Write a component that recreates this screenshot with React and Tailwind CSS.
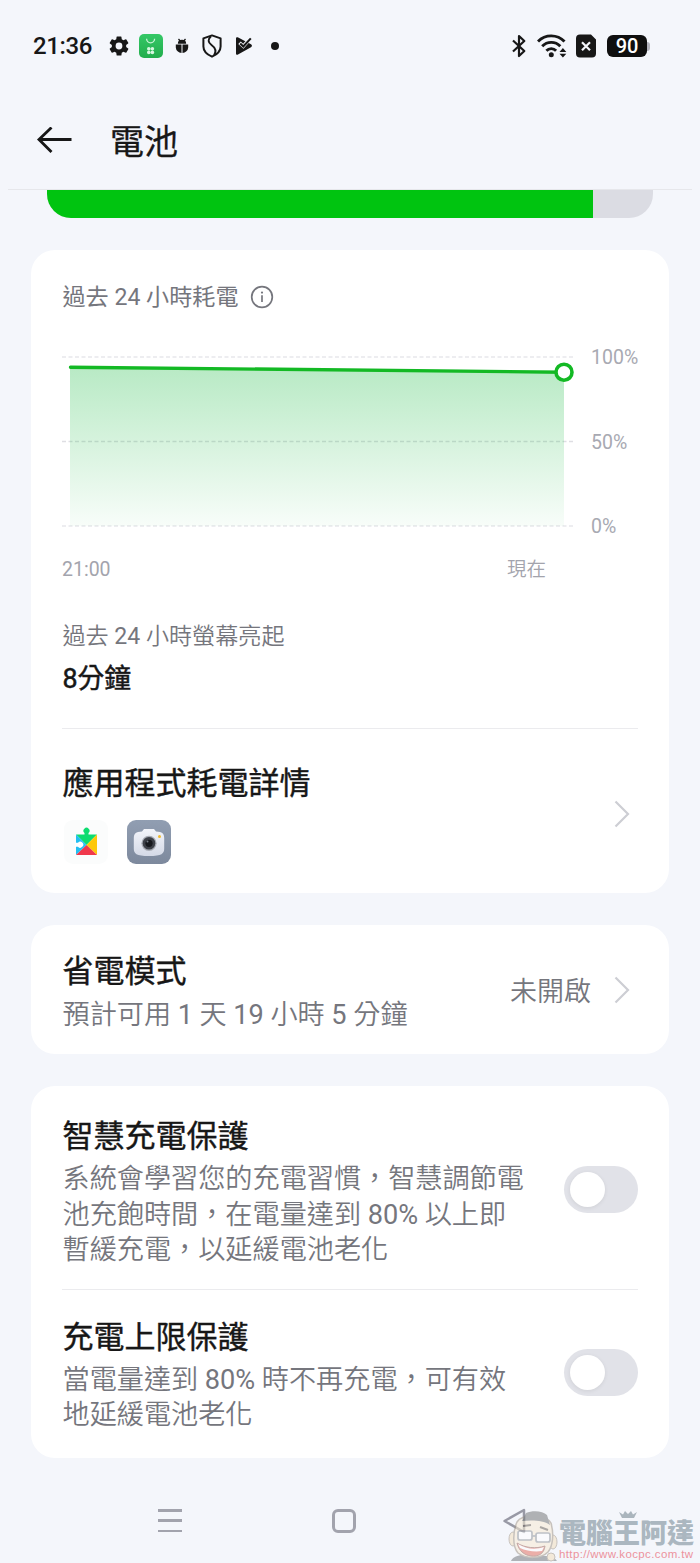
import React, { useState } from "react";

const StatusBar = () => {
  return (
    <div className="flex justify-between items-center h-[92px] pl-[33px] pr-[50px] text-[#171717]">
      <div className="flex items-center h-[28px]">
        <span className="w-[76px] text-[24px] leading-[28px] font-medium tracking-[-0.4px] whitespace-nowrap">
          21:36
        </span>
        <svg className="w-[20px] h-[20px]" viewBox="2 2 20 20" fill="currentColor">
          <path d="M19.14 12.94c.04-.3.06-.61.06-.94s-.02-.64-.07-.94l2.03-1.58a.49.49 0 0 0 .12-.61l-1.92-3.32a.49.49 0 0 0-.59-.22l-2.39.96a7 7 0 0 0-1.62-.94l-.36-2.54a.48.48 0 0 0-.48-.41h-3.84a.48.48 0 0 0-.47.41l-.36 2.54c-.59.24-1.13.57-1.62.94l-2.39-.96a.48.48 0 0 0-.59.22L2.74 8.87a.48.48 0 0 0 .12.61l2.03 1.58a7.3 7.3 0 0 0 0 1.88l-2.03 1.58a.49.49 0 0 0-.12.61l1.92 3.32c.12.22.37.29.59.22l2.39-.96c.5.38 1.03.7 1.62.94l.36 2.54c.05.24.24.41.48.41h3.84c.24 0 .44-.17.47-.41l.36-2.54a7 7 0 0 0 1.62-.94l2.39.96c.22.08.47 0 .59-.22l1.92-3.32a.48.48 0 0 0-.12-.61zM12 15.400a3.400 3.400 0 1 1 0-6.800 3.400 3.400 0 0 1 0 6.800z" />
        </svg>
        <svg className="w-[24px] h-[24px] ml-[10px]" viewBox="0 0 24 24">
          <defs>
            <linearGradient id="market" x1="0" y1="0" x2="0" y2="1">
              <stop offset="0" stopColor="#35c867" />
              <stop offset="1" stopColor="#22ad4c" />
            </linearGradient>
          </defs>
          <rect width="24" height="24" rx="5" fill="url(#market)" />
          <path d="M7.6 4.800a4 4 0 0 0 8 0" fill="none" stroke="#c9f3d6" strokeWidth="1.3" />
          <g fill="#d5f7df">
            <circle cx="9.8" cy="14.8" r="1.8" />
            <circle cx="13.4" cy="14.8" r="1.8" />
            <circle cx="9.8" cy="18.4" r="1.8" />
            <circle cx="13.4" cy="18.4" r="1.8" />
          </g>
        </svg>
        <svg className="w-[14px] h-[16px] ml-[12px]" viewBox="0 0 14 16">
          <path d="M3.500 1l1.700 2M10.500 1L8.800 3" stroke="currentColor" strokeWidth="1.3" />
          <path d="M2.800 5.800a4.200 4 0 0 1 8.400 0z" fill="currentColor" />
          <path d="M.8 6.600h5.700v8.300A5.800 5.800 0 0 1 .8 9.500zM7.500 6.600h5.700v2.900a5.800 5.800 0 0 1-5.700 5.400z" fill="currentColor" />
        </svg>
        <svg className="w-[20px] h-[24px] ml-[13px]" viewBox="0 0 20 24" fill="none" stroke="currentColor" strokeWidth="2">
          <path d="M10 1.400L18.600 4.400v8c0 4.600-3.600 8-8.600 10.300C5 20.400 1.400 17 1.400 12.400v-8z" strokeLinejoin="round" />
          <path d="M9 2.300C5.500 5.500 6 8.500 9.500 11s5.500 6 2.500 10.500" strokeWidth="1.900" />
        </svg>
        <svg className="w-[18px] h-[20px] ml-[13px]" viewBox="0 0 18 20">
          <path d="M1 2.500C1 1.200 2.100.9 3.200 1.500L16 8.200c1.300.8 1.300 2.200 0 3L3 18.400c-1 .6-2 .2-2-1z" fill="currentColor" />
          <path d="M4.500 6.800l3.800 3.500L15.500 2.200" fill="none" stroke="#f4f6fb" strokeWidth="3.600" />
          <path d="M5.200 7.500l3.100 3L15.800 2.400" fill="none" stroke="currentColor" strokeWidth="2.100" />
        </svg>
        <span className="w-[8px] h-[8px] ml-[18px] rounded-full bg-[#171717]" />
      </div>

      <div className="flex items-center h-[28px]">
        <svg className="w-[14px] h-[24px]" viewBox="0 0 14 24" fill="none" stroke="currentColor" strokeWidth="2.200">
          <path d="M1 6.500L12.300 17 7 22V2l5.300 5L1 17.500" strokeLinejoin="round" />
        </svg>
        <svg className="w-[30px] h-[24px] ml-[11px]" viewBox="0 0 30 24">
          <g fill="none" stroke="currentColor" strokeWidth="2.900">
            <path d="M1 7.500a18.500 18.500 0 0 1 26.500 0" />
            <path d="M5.200 12.200a12.600 12.600 0 0 1 18.100 0" />
            <path d="M9.400 16.700a6.700 6.700 0 0 1 9.700 0" />
          </g>
          <circle cx="14.300" cy="20.800" r="2.500" fill="currentColor" />
          <path d="M22.500 18h6.800l-3.400-4zM22.500 19.800h6.800l-3.400 3.800z" fill="currentColor" />
        </svg>
        <svg className="w-[20px] h-[24px] ml-[9px]" viewBox="0 0 20 24">
          <path d="M4 .5h11L20 5.500V19.500a4 4 0 0 1-4 4H4a4 4 0 0 1-4-4v-15a4 4 0 0 1 4-4z" fill="currentColor" />
          <path d="M6 8.300l8 8M14 8.300l-8 8" stroke="#f4f6fb" strokeWidth="2.200" />
        </svg>
        <div className="flex items-center ml-[11px]">
          <div className="flex justify-center items-center w-[40px] h-[22px] rounded-[6px] bg-[#0f0f0f] text-white text-[20px] leading-[22px] font-medium">
            90
          </div>
          <div className="w-[3px] h-[9px] rounded-r-[3px] bg-[#b3b3bd]" />
        </div>
      </div>
    </div>
  );
};

const Chevron = () => {
  return (
    <svg className="shrink-0 w-[16px] h-[28px]" viewBox="0 0 16 28" fill="none">
      <path d="M1.500 1.500L14 14 1.500 26.500" stroke="#cdced4" strokeWidth="2.200" />
    </svg>
  );
};

const Toggle = () => {
  const [isOn, setIsOn] = useState(false);

  return (
    <button
      className={
        isOn
          ? "flex justify-end items-center shrink-0 w-[74px] h-[47px] px-[6px] rounded-full bg-[#00c410]"
          : "flex items-center shrink-0 w-[74px] h-[47px] px-[6px] rounded-full bg-[#e1e2e8]"
      }
      onClick={() => setIsOn(!isOn)}
    >
      <span className="w-[35px] h-[35px] rounded-full bg-white shadow-[0_1px_4px_rgba(0,0,0,0.08)]" />
    </button>
  );
};

const UsageChart = () => {
  return (
    <div className="flex h-[190px]">
      <svg className="shrink-0 w-[512px] h-[190px]" viewBox="0 0 512 190">
        <defs>
          <linearGradient id="usage" x1="0" y1="0" x2="0" y2="1">
            <stop offset="0" stopColor="#12b83c" stopOpacity="0.3" />
            <stop offset="1" stopColor="#12b83c" stopOpacity="0.03" />
          </linearGradient>
        </defs>
        <g stroke="#e8e8ec" strokeWidth="1.500" strokeDasharray="4 2.500">
          <path d="M0 17h511" />
          <path d="M0 101.500h511" stroke="#dedee3" />
          <path d="M0 186h511" />
        </g>
        <path d="M8 27L502 32V186H8z" fill="url(#usage)" />
        <path d="M8.500 27.200L502 32.200" stroke="#13b924" strokeWidth="3.400" strokeLinecap="round" />
        <circle cx="502" cy="32.200" r="8" fill="#fff" stroke="#13b924" strokeWidth="3.600" />
      </svg>
      <div className="flex flex-col justify-between h-[193px] pt-[6px] pl-[17px] text-[19.500px] leading-[24px] text-[#a8a9b2]">
        <span>100%</span>
        <span>50%</span>
        <span className="mb-[-6px]">0%</span>
      </div>
    </div>
  );
};

const PlayServicesIcon = () => {
  return (
    <svg className="w-[44px] h-[44px]" viewBox="0 0 44 44">
      <rect width="44" height="44" rx="9" fill="#fbfcfc" />
      <path d="M12 14.500h21L22.500 25z" fill="#0ddc70" />
      <path d="M20.500 15v-2a3 3 0 1 1 4 0v2z" fill="#0ddc70" />
      <path d="M12 14.500L22.500 25 12 35z" fill="#22bff2" />
      <path d="M33 14.500V35L22.500 25z" fill="#fdc80a" />
      <path d="M12 35h21L22.500 25z" fill="#f0384c" />
      <path d="M11 22.700h3a3 3 0 1 1 0 4h-3z" fill="#fff" />
    </svg>
  );
};

const CameraIcon = () => {
  return (
    <svg className="w-[44px] h-[44px]" viewBox="0 0 44 44">
      <defs>
        <linearGradient id="cameraBg" x1="0" y1="0" x2="0" y2="1">
          <stop offset="0" stopColor="#919eb2" />
          <stop offset="1" stopColor="#7d899d" />
        </linearGradient>
        <linearGradient id="cameraBody" x1="0" y1="0" x2="0" y2="1">
          <stop offset="0" stopColor="#f2f4fa" />
          <stop offset="1" stopColor="#d4d9e6" />
        </linearGradient>
      </defs>
      <rect width="44" height="44" rx="9" fill="url(#cameraBg)" />
      <path d="M17 9h10l2 2.500 4 .5c3 .5 4.200 2.500 4.200 6v10.500c0 5-2.200 7.500-15.200 7.500S6.800 33.500 6.800 28.500V18c0-3.500 1.200-5.500 4.200-6l4-.5z" fill="url(#cameraBody)" />
      <circle cx="22" cy="23.300" r="7.600" fill="#a7abb4" />
      <circle cx="22" cy="23.300" r="6.300" fill="#3d4048" />
      <circle cx="22" cy="23.300" r="3.600" fill="#17191e" />
      <circle cx="20.500" cy="21.500" r="1" fill="#777d88" />
      <circle cx="32.500" cy="16.500" r="1.500" fill="#f0b92c" />
    </svg>
  );
};

const ItemTitle = ({ children }) => {
  return (
    <div className="pl-[0.5px] text-[31px] leading-[40px] text-[#171717] [-webkit-text-stroke:0.4px_#171717] whitespace-nowrap">
      {children}
    </div>
  );
};

// numbers are set one step heavier than the thin Chinese text around them
const LightText = ({ text }) => {
  return (
    <span className="font-[350]">
      {text.split(/(\d+%?)/).map((part, i) =>
        i % 2 ? (
          <span key={i} className="font-normal">
            {part}
          </span>
        ) : (
          part
        )
      )}
    </span>
  );
};

const SettingItem = ({ title, lines }) => {
  return (
    <div className="flex justify-between items-center">
      <div className="pt-[6px]">
        <ItemTitle>{title}</ItemTitle>
        <div className="mt-[5px] pl-[0.5px] text-[27.150px] leading-[35.500px] text-[#75767d] whitespace-nowrap">
          {lines.map((line) => (
            <div key={line}>
              <LightText text={line} />
            </div>
          ))}
        </div>
      </div>
      <Toggle />
    </div>
  );
};

const Watermark = () => {
  return (
    <div className="absolute right-[5px] bottom-0 flex items-end h-[56px]">
      <svg className="w-[55px] h-[56px]" viewBox="0 0 55 56" opacity="0.55">
        <path d="M6 54c1-3 5-5 10-6l26 1c5 0 8 2 10 5z" fill="#777b80" />
        <ellipse cx="8" cy="32" rx="4" ry="7" fill="#f3dfbf" stroke="#a3988b" />
        <ellipse cx="48" cy="35" rx="4" ry="7" fill="#f3dfbf" stroke="#a3988b" />
        <path d="M12 15c5-8 29-8 34 1 3 11 2 23-3 29-7 7-22 7-30 1-6-7-5-22-1-31z" fill="#f8ebd4" stroke="#a3988b" strokeWidth="1.500" />
        <path d="M17 14L21 6c7-3 17-2 21 2l3 10c-7-5-18-5-28-4z" fill="#77797b" />
        <path d="M18 19l8-1M35 20l8 3" stroke="#6f655d" strokeWidth="2" />
        <g fill="#fff" stroke="#92979d" strokeWidth="1.700">
          <rect x="13" y="24" width="14" height="9" rx="2" />
          <rect x="31" y="26" width="14" height="9" rx="2" />
          <path d="M27 29h4" />
        </g>
        <path d="M12 36c8 5 19 6 28 3-1 8-7 11-14 10-7-1-12-5-14-13z" fill="#e47466" stroke="#9b6b62" />
        <path d="M13 37c8 5 17 6 26 3l-2 4c-7 1-16 0-22-3z" fill="#fff" />
        <circle cx="46" cy="50" r="4" fill="#f3dfbf" stroke="#a3988b" />
      </svg>
      <div className="relative w-[136px] ml-[-1px]">
        <svg className="absolute left-[60px] top-[-11px] w-[18px] h-[8px]" viewBox="0 0 18 8">
          <path d="M0 2l4 2.500L6 1l3 3 3-3 2 3.500L18 2l-3 6H3z" fill="#aab5bd" />
        </svg>
        <div className="text-[27px] leading-[27px] font-black text-[#abb7c0] whitespace-nowrap">
          電腦王阿達
        </div>
        <div className="h-[15px] font-['Liberation_Sans'] text-[11.500px] leading-[12px] tracking-[0.370px] text-[#ec939d] whitespace-nowrap">
          http://www.kocpc.com.tw
        </div>
      </div>
    </div>
  );
};

const NavBar = () => {
  return (
    <div className="relative h-[105px]">
      <div className="flex items-center h-full pt-[20px] pl-[158px]">
        <div className="flex flex-col justify-between w-[24px] h-[23px]">
          <span className="h-[2.500px] bg-[#a2a3ad]" />
          <span className="h-[2.500px] bg-[#a2a3ad]" />
          <span className="h-[2.500px] bg-[#a2a3ad]" />
        </div>
        <div className="w-[24px] h-[24px] ml-[150px] rounded-[6px] border-[3px] border-[#a2a3ad]" />
        <svg className="w-[24px] h-[26px] ml-[146px]" viewBox="0 0 24 26">
          <path d="M22 2v22L2.500 13z" fill="none" stroke="#9899a5" strokeWidth="2.500" strokeLinejoin="round" />
        </svg>
      </div>
      <Watermark />
    </div>
  );
};

const App = () => {
  return (
    <div className="w-[700px] h-[1563px] overflow-hidden bg-[#f4f6fb] font-[Roboto,'Noto_Sans_CJK_TC',sans-serif]">
      <StatusBar />

      <div className="flex items-center h-[98px] mx-[8px] pl-[28px] border-b border-[#e6e7eb]">
        <svg className="w-[36px] h-[28px]" viewBox="0 0 36 28" fill="none" stroke="#171717" strokeWidth="2.800">
          <path d="M35.500 12.500H3M15.500.5L3 12.500 15.500 25" />
        </svg>
        <h1 className="ml-[38px] mt-[2px] text-[34px] leading-[40px] text-[#171717] [-webkit-text-stroke:0.3px_#171717]">
          電池
        </h1>
      </div>

      <div className="h-[28px] mx-[47px] rounded-b-[24px] overflow-hidden bg-[#dbdce3]">
        <div className="w-[546px] h-full bg-[#00c410]" />
      </div>

      <div className="h-[643px] mt-[32px] mx-[31px] px-[31px] pt-[31px] rounded-[24px] bg-white">
        <div className="flex items-center h-[34px] pl-[0.5px] text-[23.100px] leading-[34px] text-[#75767d]">
          <span>過去 24 小時耗電</span>
          <svg className="w-[24px] h-[24px] ml-[12px] mb-[2px]" viewBox="0 0 24 24" fill="none" stroke="currentColor">
            <circle cx="12" cy="12" r="10.300" strokeWidth="1.700" />
            <path d="M12 10.300v6.700" strokeWidth="1.700" />
            <circle cx="12" cy="7.600" r="1.100" fill="currentColor" stroke="none" />
          </svg>
        </div>
        <div className="mt-[25px]">
          <UsageChart />
        </div>
        <div className="flex justify-between mt-[26px] pr-[92px] text-[19.500px] leading-[28px] text-[#a3a4ad]">
          <span>21:00</span>
          <LightText text="現在" />
        </div>
        <div className="mt-[37px] pl-[0.5px] text-[23.100px] leading-[32px] text-[#75767d]">
          <LightText text="過去 24 小時螢幕亮起" />
        </div>
        <div className="mt-[8px] pl-[0.5px] text-[26.800px] leading-[36px] text-[#171717] [-webkit-text-stroke:0.5px_#171717]">
          8分鐘
        </div>
        <div className="mt-[31px] h-px bg-[#ebebee]" />
        <div className="flex justify-between items-center h-[164px] pr-[8px] pt-[6px]">
          <div>
            <ItemTitle>應用程式耗電詳情</ItemTitle>
            <div className="flex gap-[19px] mt-[16px] pl-[2px]">
              <PlayServicesIcon />
              <CameraIcon />
            </div>
          </div>
          <Chevron />
        </div>
      </div>

      <div className="flex justify-between items-center h-[129px] mt-[32px] mx-[31px] pl-[31px] pr-[39px] rounded-[24px] bg-white">
        <div className="pt-[6px]">
          <ItemTitle>省電模式</ItemTitle>
          <div className="mt-[5px] pl-[0.5px] text-[27.150px] leading-[36px] text-[#75767d] whitespace-nowrap">
            <LightText text="預計可用 1 天 19 小時 5 分鐘" />
          </div>
        </div>
        <div className="flex items-center gap-[23px] text-[27px] text-[#75767d]">
          <div className="pt-[5px]">
            <LightText text="未開啟" />
          </div>
          <Chevron />
        </div>
      </div>

      <div className="h-[372px] mt-[32px] mx-[31px] px-[31px] pt-[25px] rounded-[24px] bg-white">
        <SettingItem
          title="智慧充電保護"
          lines={["系統會學習您的充電習慣，智慧調節電", "池充飽時間，在電量達到 80% 以上即", "暫緩充電，以延緩電池老化"]}
        />
        <div className="mt-[20px] mb-[22px] h-px bg-[#ebebee]" />
        <SettingItem
          title="充電上限保護"
          lines={["當電量達到 80% 時不再充電，可有效", "地延緩電池老化"]}
        />
      </div>

      <NavBar />
    </div>
  );
};

export default App;
